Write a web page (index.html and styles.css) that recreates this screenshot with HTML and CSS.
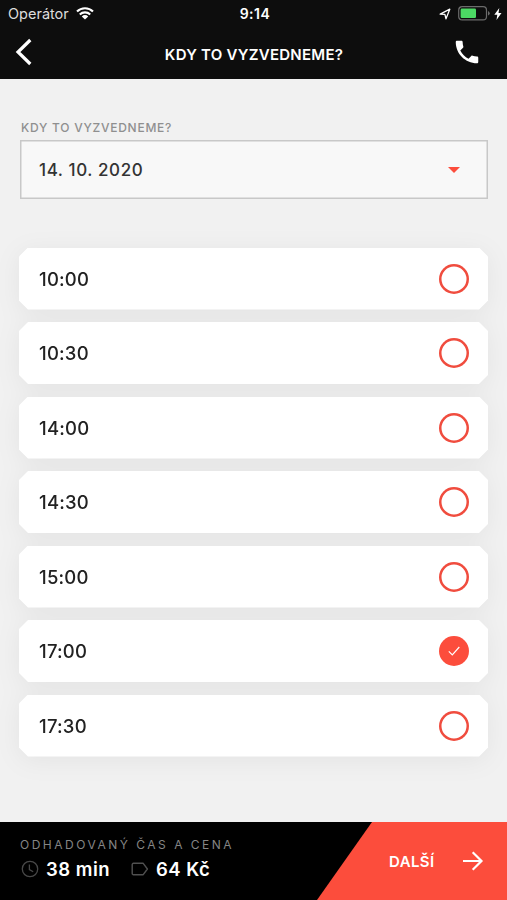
FILE: index.html
```html
<!DOCTYPE html>
<html lang="cs">

<head>
    <meta charset="UTF-8">
    <meta name="viewport" content="width=device-width, initial-scale=1.0">
    <title>Kdy to vyzvedneme?</title>
    <link rel="stylesheet" href="styles.css">
</head>

<body>
    <header class="header">
        <div class="status-bar">
            <div class="carrier">
                <span class="carrier-name">Operátor</span>
                <svg class="wifi" width="18" height="13" viewBox="0 0 18 13">
                    <path d="M1 4.6a11.4 11.4 0 0 1 16 0M3.8 7.5a7.4 7.4 0 0 1 10.4 0" fill="none" stroke="#fff" stroke-width="2.1" />
                    <path d="M5.8 9.4a4.6 4.6 0 0 1 6.4 0L9 12.6z" fill="#fff" />
                </svg>
            </div>
            <span class="clock">9:14</span>
            <div class="battery-info">
                <svg width="12" height="12" viewBox="0 0 12 12">
                    <path d="M1.2 6.2L10.8 1.2L7 10.8L5.9 6.4z" fill="none" stroke="#fff" stroke-width="1.3" stroke-linejoin="round" />
                </svg>
                <svg class="battery" width="32" height="15" viewBox="0 0 32 15">
                    <rect x=".7" y=".7" width="27.8" height="13.2" rx="3.5" fill="none" stroke="#6b6b6b" stroke-width="1.2" />
                    <rect x="2.6" y="2.6" width="15.4" height="9.4" rx="1.3" fill="#4cd964" />
                    <path d="M30 5v4.6q1.7-.7 1.7-2.3T30 5z" fill="#6b6b6b" />
                </svg>
                <svg class="bolt" width="8" height="12" viewBox="0 0 8 12">
                    <path d="M5.3 0L.3 6.7h3L2.5 12l5-7h-3z" fill="#fff" />
                </svg>
            </div>
        </div>
        <div class="nav-bar">
            <button class="icon-btn back">
                <svg width="18" height="28" viewBox="0 0 18 28">
                    <path d="M16.3 2L4 14l12.3 12" fill="none" stroke="#fff" stroke-width="3.2" />
                </svg>
            </button>
            <h1 class="title">KDY TO VYZVEDNEME?</h1>
            <button class="icon-btn call">
                <svg width="30" height="30" viewBox="0 0 24 24">
                    <path d="M6.62 10.79c1.44 2.83 3.76 5.14 6.59 6.59l2.2-2.2c.27-.27.67-.36 1.02-.24 1.12.37 2.33.57 3.57.57.55 0 1 .45 1 1V20c0 .55-.45 1-1 1-9.39 0-17-7.61-17-17 0-.55.45-1 1-1h3.5c.55 0 1 .45 1 1 0 1.25.2 2.45.57 3.57.11.35.03.74-.25 1.02l-2.2 2.2z" fill="#fff" />
                </svg>
            </button>
        </div>
    </header>

    <main class="content">
        <label class="field-label">KDY TO VYZVEDNEME?</label>
        <div class="select">
            <span class="date">14. 10. 2020</span>
            <span class="caret"></span>
        </div>

        <ul class="times">
            <li class="time"><span class="hour">10:00</span><span class="radio"></span></li>
            <li class="time"><span class="hour">10:30</span><span class="radio"></span></li>
            <li class="time"><span class="hour">14:00</span><span class="radio"></span></li>
            <li class="time"><span class="hour">14:30</span><span class="radio"></span></li>
            <li class="time"><span class="hour">15:00</span><span class="radio"></span></li>
            <li class="time">
                <span class="hour">17:00</span>
                <span class="radio checked">
                    <svg width="12" height="10" viewBox="0 0 12 10">
                        <path d="M.8 5.3l3.5 3.5L11.3 1" fill="none" stroke="#fff" stroke-width="1.2" />
                    </svg>
                </span>
            </li>
            <li class="time"><span class="hour">17:30</span><span class="radio"></span></li>
        </ul>
    </main>

    <footer class="footer">
        <div class="summary">
            <div class="summary-label">ODHADOVANÝ ČAS A CENA</div>
            <div class="summary-values">
                <svg class="clock-icon" width="18" height="18" viewBox="0 0 18 18" fill="none" stroke="#484848" stroke-width="1.3">
                    <circle cx="9" cy="9" r="7.7" />
                    <path d="M8.4 4.6v5l3.8 2.1" />
                </svg>
                <span class="duration">38 min</span>
                <svg class="tag-icon" width="18" height="14" viewBox="0 0 18 14" fill="none" stroke="#505050" stroke-width="1.4" stroke-linejoin="round">
                    <path d="M2.5 1.3h9.7L16.4 7l-4.2 5.7H2.5q-1.3 0-1.3-1.3V2.6q0-1.3 1.3-1.3z" />
                </svg>
                <span class="price">64 Kč</span>
            </div>
        </div>
        <button class="next">
            <span class="next-label">DALŠÍ</span>
            <svg width="22" height="20" viewBox="0 0 22 20">
                <path d="M1 10h18.5M10.7 1.2L19.5 10l-8.8 8.8" fill="none" stroke="#fff" stroke-width="2.2" />
            </svg>
        </button>
    </footer>
</body>

</html>
```

FILE: styles.css
```css
* {
    box-sizing: border-box;
}

body {
    font-family: Inter, "Liberation Sans", sans-serif;
    background-color: #f1f1f1;
    display: flex;
    flex-direction: column;
    height: 900px;
    margin: 0;
    overflow: hidden;
}

button {
    background: none;
    border: none;
    padding: 0;
    font-family: inherit;
    cursor: pointer;
}

svg {
    display: block;
    flex: none;
}

.header {
    background: #0d0d0d;
    color: #fff;
    height: 79px;
}

.status-bar {
    display: grid;
    grid-template-columns: 1fr auto 1fr;
    align-items: center;
    height: 27px;
    padding: 0 5px 0 8px;
    font-size: 14.5px;
}

.carrier {
    display: flex;
    align-items: center;
    gap: 7px;
    color: #ddd;
}

.clock {
    font-weight: 600;
    font-size: 14px;
    letter-spacing: 0.5px;
}

.battery-info {
    display: flex;
    align-items: center;
    justify-content: flex-end;
}

.battery {
    margin: 0 4px 0 7px;
}

.nav-bar {
    display: grid;
    grid-template-columns: 60px 1fr 60px;
    align-items: center;
    height: 50px;
}

.back {
    padding-left: 14px;
}

.title {
    margin: 4px 0 0;
    padding-left: 1px;
    text-align: center;
    font-size: 15px;
    font-weight: 600;
    letter-spacing: 0.25px;
}

.call {
    padding-left: 5px;
}

.content {
    flex: 1;
    padding: 40px 19px 0;
}

.field-label {
    display: block;
    height: 21px;
    padding-left: 2px;
    line-height: 17px;
    font-size: 12px;
    font-weight: 500;
    letter-spacing: 0.75px;
    color: #8f8f8f;
}

.select {
    display: flex;
    align-items: center;
    justify-content: space-between;
    height: 59px;
    margin: 0 0 0 1px;
    padding: 0 28px 0 19px;
    background: #f8f8f8;
    box-shadow: inset 0 0 0 1.5px #c8c8c8;
}

.date {
    font-size: 17px;
    font-weight: 500;
    letter-spacing: 0.6px;
    color: #333;
}

.caret {
    border: 6px solid transparent;
    border-top-color: #fc4d3c;
    border-bottom: 0;
}

.times {
    display: flex;
    flex-direction: column;
    gap: 12.5px;
    margin: 48.5px 0 0;
    padding: 0;
    list-style: none;
    filter: drop-shadow(0 4px 12px rgba(0, 0, 0, 0.055));
}

.time {
    display: flex;
    align-items: center;
    justify-content: space-between;
    height: 62px;
    padding: 0 19px 0 20px;
    background: #fff;
    clip-path: polygon(9px 0, calc(100% - 9px) 0, 100% 9px, 100% calc(100% - 9px), calc(100% - 9px) 100%, 9px 100%, 0 calc(100% - 9px), 0 9px);
}

.hour {
    font-size: 18.5px;
    font-weight: 500;
    letter-spacing: 0.2px;
    color: #222;
}

.radio {
    display: flex;
    align-items: center;
    justify-content: center;
    width: 30px;
    height: 30px;
    border-radius: 50%;
    box-shadow: inset 0 0 0 2.5px #f04c3e;
}

.radio.checked {
    background: #fc4d3c;
    box-shadow: none;
}

.footer {
    display: flex;
    justify-content: space-between;
    height: 78px;
    background: #000;
}

.summary {
    padding: 15px 0 0 20px;
}

.summary-label {
    line-height: 16px;
    font-size: 12px;
    letter-spacing: 2.5px;
    color: #858585;
}

.summary-values {
    display: flex;
    align-items: center;
    height: 24px;
    margin-top: 4px;
    font-size: 18.5px;
    font-weight: 600;
    letter-spacing: 0.5px;
    color: #fff;
}

.duration {
    width: 65px;
    white-space: nowrap;
}

.clock-icon {
    margin: 0 7px 0 1px;
}

.tag-icon {
    margin: 0 7px 0 20px;
}

.next {
    display: flex;
    align-items: center;
    justify-content: space-between;
    width: 190px;
    padding: 0 23px 0 72px;
    background: #fc4d3c;
    color: #fff;
    font-size: 15px;
    font-weight: 600;
    letter-spacing: 0.4px;
    clip-path: polygon(55px 0, 100% 0, 100% 100%, 0 100%);
}
```
